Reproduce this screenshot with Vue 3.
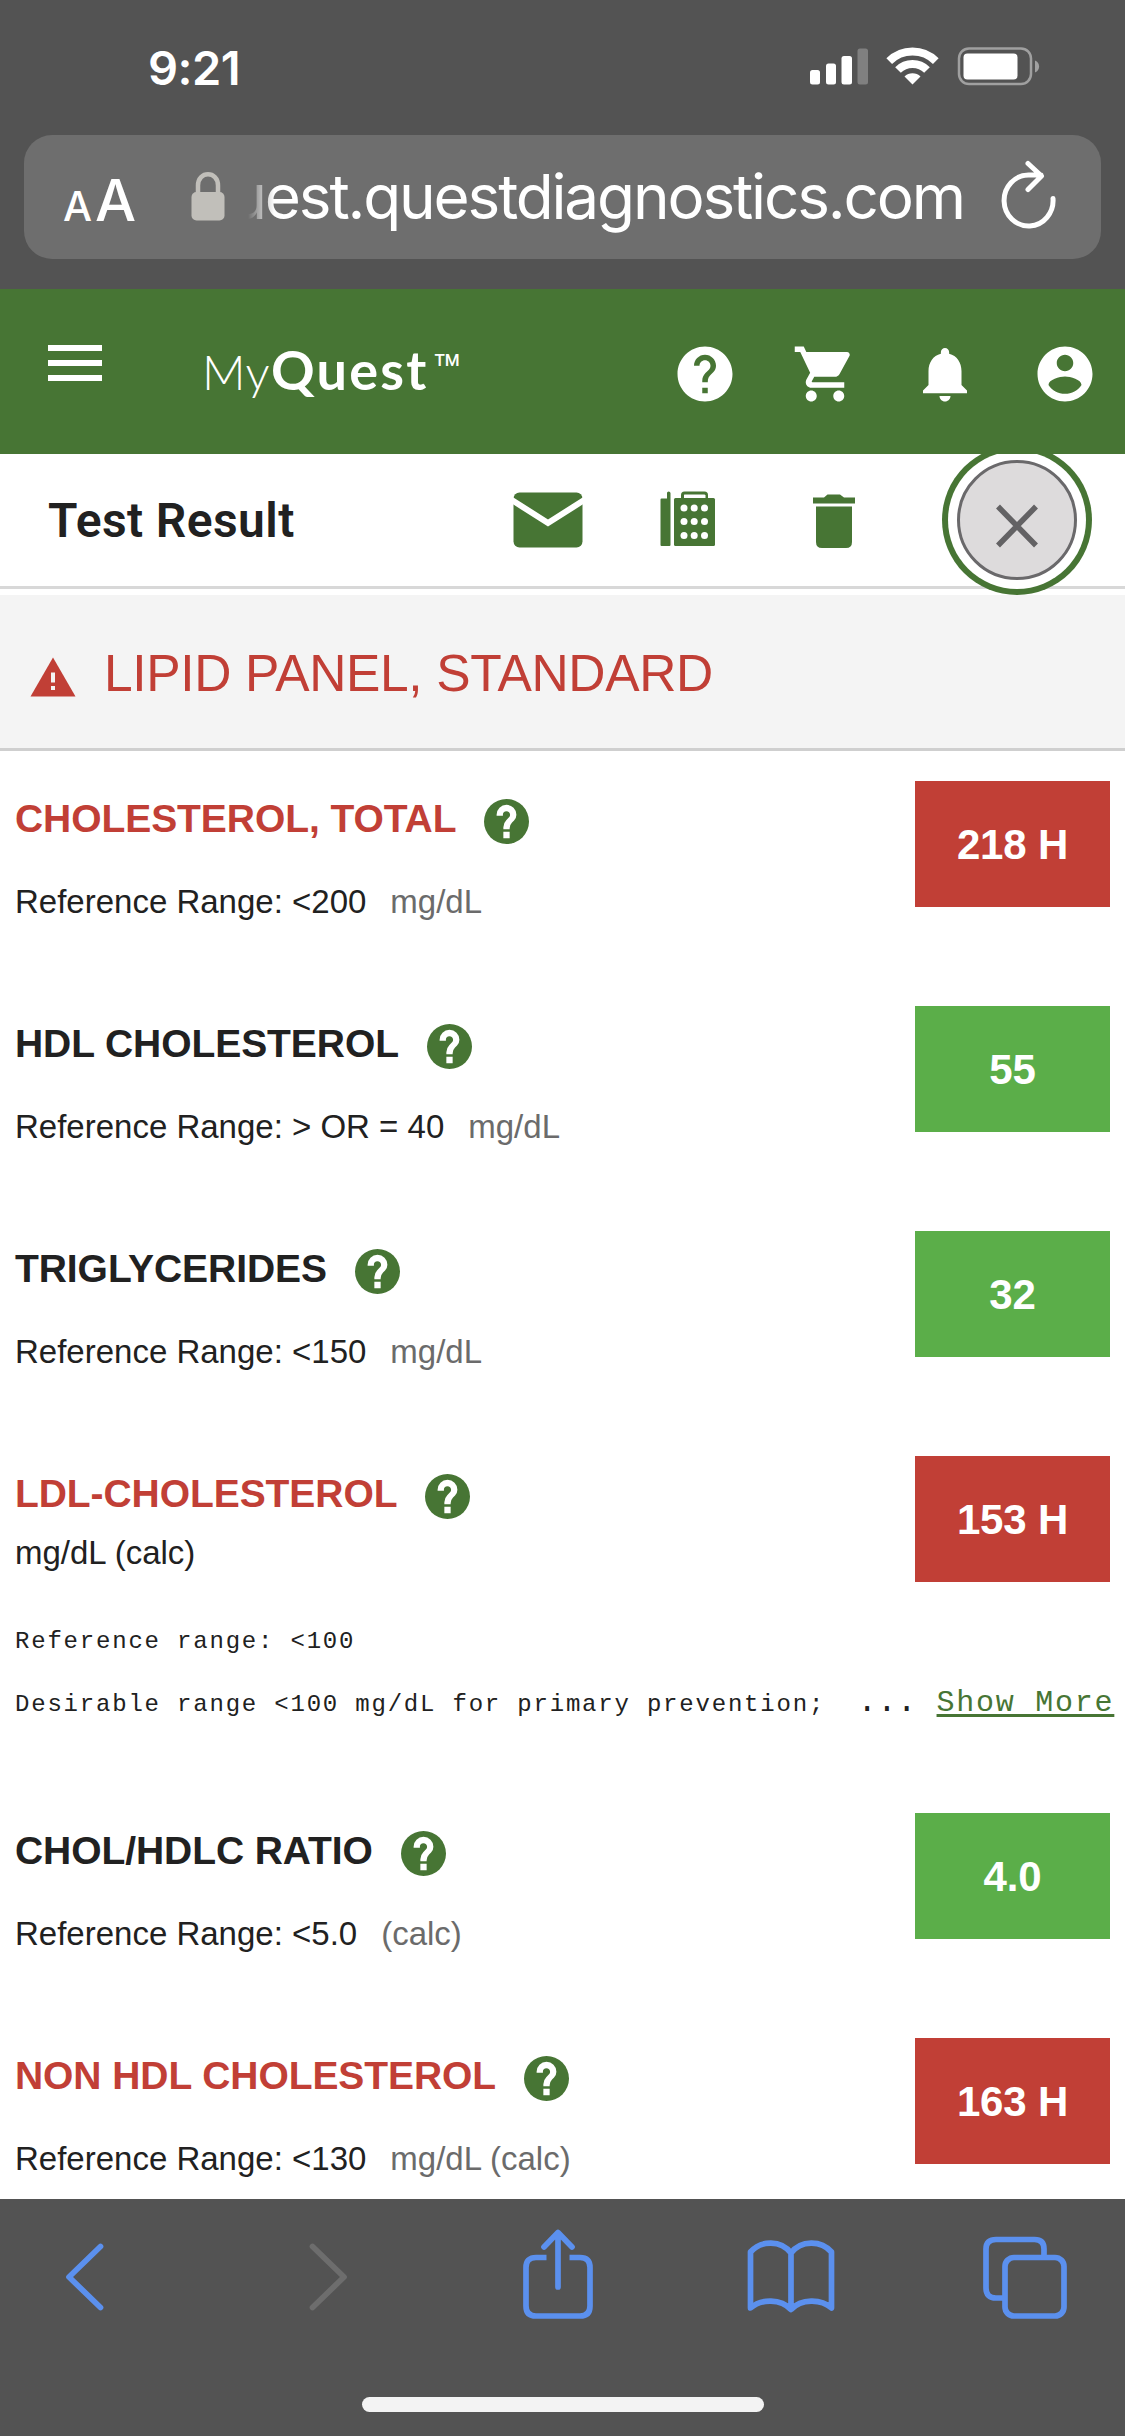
<template>
    <div class="phone">
        <header class="browser-top">
            <div class="status-bar">
                <span class="clock">9:21</span>
                <svg class="status-icons" viewBox="0 0 232 40" aria-hidden="true">
                    <rect x="1" y="24" width="10" height="14.5" rx="2.5" fill="#fff" />
                    <rect x="17" y="17.5" width="10" height="21" rx="2.5" fill="#fff" />
                    <rect x="32.5" y="10" width="10.5" height="28.5" rx="2.5" fill="#fff" />
                    <rect x="48.5" y="2.5" width="10.5" height="36" rx="2.5" fill="#808080" />
                    <path d="M80.2 15.2a33 33 0 0 1 46.6 0" fill="none" stroke="#fff" stroke-width="8" />
                    <path d="M89 24a20.5 20.5 0 0 1 29 0" fill="none" stroke="#fff" stroke-width="8" />
                    <path d="M103.5 38.5l-8-8a11.5 11.5 0 0 1 16 0z" fill="#fff" />
                    <rect x="150" y="2.5" width="72" height="35.5" rx="10" fill="none" stroke="#a0a0a0" stroke-width="2.5" />
                    <rect x="154.5" y="7.5" width="54" height="26" rx="4" fill="#fff" />
                    <path d="M226 14.500c5.500 2 5.500 10 0 12z" fill="#a0a0a0" />
                </svg>
            </div>
            <div class="url-bar">
                <span class="text-size"><small>A</small><span>A</span></span>
                <svg class="lock" viewBox="0 0 34 49" aria-hidden="true">
                    <rect x="0.5" y="20" width="33" height="28.5" rx="5" fill="#c1bfba" />
                    <path d="M7 22V13.500C7 -1.500 27 -1.500 27 13.500V22" fill="none" stroke="#c1bfba" stroke-width="4.5" />
                </svg>
                <div class="url"><span>uest.questdiagnostics.com</span></div>
                <svg class="reload" viewBox="0 0 60 70" aria-hidden="true">
                    <path d="M53 39.500A24.500 25.500 0 1 1 28.500 16H41M28 4.500L41.500 17L28 30.500" />
                </svg>
            </div>
        </header>

        <nav class="site-header">
            <div class="hamburger"><i></i><i></i><i></i></div>
            <div class="logo"><span class="my">My</span><b>Quest</b><sup>TM</sup></div>
            <div class="nav-icons">
                <svg v-for="icon in navIcons" :key="icon.name" viewBox="0 0 24 24" role="img" :aria-label="icon.name">
                    <path :d="icon.path" />
                </svg>
            </div>
        </nav>

        <section class="toolbar">
            <h1>Test Result</h1>
            <svg class="mail" viewBox="0 0 70 56" aria-hidden="true">
                <rect x="0.5" y="0.5" width="69" height="55" rx="6" fill="#477534" />
                <path d="M-2 7.500L35 31L72 7.500" fill="none" stroke="#fff" stroke-width="6" />
            </svg>
            <svg class="fax" viewBox="0 0 56 56" aria-hidden="true">
                <path d="M0.500 8.500q0-1 1-1H7V2q0-1.500 1.700-1.500T10.500 2V54q0 1-1 1h-8q-1 0-1-1z" fill="#477534" />
                <rect x="14" y="7" width="41" height="48" rx="1.5" fill="#477534" />
                <path d="M22.500 10V4q0-2 2-2h20q2 0 2 2v6" fill="none" stroke="#477534" stroke-width="3" />
                <rect x="24" y="4" width="21.5" height="3" fill="#fff" />
                <template v-for="y in [17, 30.5, 44.5]" :key="y">
                    <circle v-for="x in [24, 34.2, 44.5]" :key="x" :cx="x" :cy="y" r="3.5" fill="#fff" />
                </template>
            </svg>
            <svg class="trash" viewBox="0 0 42 54" aria-hidden="true">
                <path d="M0 3.500H11L14.500 0.500H27L31 3.500H42V9.500H0zM3 12.500H39V48q0 6-6 6H9q-6 0-6-6z" fill="#477534" />
            </svg>
            <button class="close" aria-label="Close">
                <svg viewBox="0 0 42 44"><path d="M2 2.500L40 41.500M40 2.500L2 41.500" /></svg>
            </button>
        </section>

        <section class="panel-title">
            <svg viewBox="0 0 46 40" aria-hidden="true">
                <path d="M23 0.500L45.500 39.500H0.500z" fill="#c13f36" />
                <path d="M21 15.500h4v10h-4zM21 29h4v4h-4z" fill="#f4f4f4" />
            </svg>
            <h2>LIPID PANEL, STANDARD</h2>
        </section>

        <main class="results">
            <article v-for="result in results" :key="result.name" class="result" :class="{ high: result.high, calculated: result.note }">
                <div class="summary">
                    <div class="info">
                        <div class="name">
                            <h3>{{ result.name }}</h3>
                            <svg viewBox="2 2 20 20" aria-hidden="true">
                                <circle cx="12" cy="12" r="10" fill="#477534" />
                                <path :d="questionMark" fill="#fff" stroke="#fff" stroke-width="0.8" />
                            </svg>
                        </div>
                        <p v-if="result.range" class="range">
                            Reference Range: {{ result.range }}<span class="unit">{{ result.unit }}</span>
                        </p>
                        <p v-else class="range">{{ result.unit }}</p>
                    </div>
                    <div class="value">{{ result.value }}</div>
                </div>
                <div v-if="result.note" class="note">
                    <p>{{ result.note[0] }}</p>
                    <p class="truncated">{{ result.note[1] }}<span class="dots">...</span><a>Show More</a></p>
                </div>
            </article>
        </main>

        <footer class="browser-bottom">
            <div class="tools">
                <svg class="back" viewBox="0 0 40 68"><path d="M35.500 3.500L4 34L35.500 64.500" /></svg>
                <svg class="forward" viewBox="0 0 40 68"><path d="M4.500 3.500L36 34L4.500 64.500" /></svg>
                <svg class="share" viewBox="0 0 70 90">
                    <path class="flat" d="M23.500 28.500H13Q3 28.500 3 38.500V77Q3 87 13 87H57Q67 87 67 77V38.500Q67 28.500 57 28.500H46.500" />
                    <path d="M35 58V4M21 18L35 3.500L49 18" />
                </svg>
                <svg class="book" viewBox="0 0 88 74">
                    <path d="M44 69V13C34 0 14 0 3.500 12V68C14 58.500 34 58.500 44 69.500C54 58.500 74 58.500 84.500 68V12C74 0 54 0 44 13" />
                </svg>
                <svg class="tabs" viewBox="0 0 84 83">
                    <path class="flat" d="M20 62H13Q3 62 3 52V13Q3 3.500 13 3.500H51.500Q61 3.500 61 13V20" />
                    <rect x="22" y="21.5" width="59" height="58.5" rx="9" />
                </svg>
            </div>
            <div class="home-indicator"></div>
        </footer>
    </div>
</template>

<script setup>
const questionMark = 'M13 19h-2v-2h2v2zm2.070-7.750l-.9.920C13.450 12.900 13 13.500 13 15h-2v-.5c0-1.100.45-2.100 1.170-2.830l1.240-1.260c.37-.36.59-.86.59-1.410 0-1.100-.9-2-2-2s-2 .9-2 2H8c0-2.210 1.790-4 4-4s4 1.790 4 4c0 .88-.36 1.680-.93 2.250z';

const navIcons = [
    {
        name: 'Help',
        path: 'M12 2C6.480 2 2 6.480 2 12s4.480 10 10 10 10-4.480 10-10S17.520 2 12 2zm1 17h-2v-2h2v2zm2.070-7.750l-.9.920C13.450 12.900 13 13.500 13 15h-2v-.5c0-1.100.45-2.100 1.170-2.830l1.240-1.260c.37-.36.59-.86.59-1.410 0-1.100-.9-2-2-2s-2 .9-2 2H8c0-2.210 1.790-4 4-4s4 1.790 4 4c0 .88-.36 1.680-.93 2.250z'
    },
    {
        name: 'Cart',
        path: 'M7 18c-1.100 0-1.990.9-1.990 2S5.900 22 7 22s2-.9 2-2-.9-2-2-2zM1 2v2h2l3.600 7.590-1.350 2.450c-.16.28-.25.61-.25.96 0 1.100.9 2 2 2h12v-2H7.420c-.14 0-.25-.11-.25-.25l.03-.12.9-1.630h7.450c.75 0 1.410-.41 1.750-1.030l3.580-6.490c.08-.14.12-.31.12-.48 0-.55-.45-1-1-1H5.210l-.94-2H1zm16 16c-1.100 0-1.990.9-1.990 2s.89 2 1.990 2 2-.9 2-2-.9-2-2-2z'
    },
    {
        name: 'Notifications',
        path: 'M12 22c1.100 0 2-.9 2-2h-4c0 1.100.89 2 2 2zm6-6v-5c0-3.070-1.640-5.640-4.500-6.320V4c0-.83-.67-1.500-1.500-1.500s-1.500.67-1.500 1.500v.68C7.630 5.360 6 7.920 6 11v5l-2 2v1h16v-1l-2-2z'
    },
    {
        name: 'Account',
        path: 'M12 2C6.480 2 2 6.480 2 12s4.480 10 10 10 10-4.480 10-10S17.520 2 12 2zm0 3c1.660 0 3 1.340 3 3s-1.340 3-3 3-3-1.340-3-3 1.340-3 3-3zm0 14.200c-2.500 0-4.710-1.280-6-3.220.03-1.990 4-3.080 6-3.080 1.990 0 5.970 1.090 6 3.080-1.290 1.940-3.500 3.220-6 3.220z'
    }
];

const results = [
    { name: 'CHOLESTEROL, TOTAL', range: '<200', unit: 'mg/dL', value: '218 H', high: true },
    { name: 'HDL CHOLESTEROL', range: '> OR = 40', unit: 'mg/dL', value: '55' },
    { name: 'TRIGLYCERIDES', range: '<150', unit: 'mg/dL', value: '32' },
    {
        name: 'LDL-CHOLESTEROL',
        unit: 'mg/dL (calc)',
        value: '153 H',
        high: true,
        note: ['Reference range: <100', 'Desirable range <100 mg/dL for primary prevention;']
    },
    { name: 'CHOL/HDLC RATIO', range: '<5.0', unit: '(calc)', value: '4.0' },
    { name: 'NON HDL CHOLESTEROL', range: '<130', unit: 'mg/dL (calc)', value: '163 H', high: true }
];
</script>

<style>
body {
    margin: 0;
    background: #fff;
}
</style>

<style scoped>
.phone {
    display: flex;
    flex-direction: column;
    width: 1125px;
    height: 2436px;
    overflow: hidden;
    background: #fff;
    color: #212121;
    font-family: "Liberation Sans", Arial, sans-serif;
}

h1, h2, h3, p {
    margin: 0;
}

svg {
    display: block;
    flex: none;
}

/* Browser top */
.browser-top {
    flex: none;
    box-sizing: border-box;
    height: 289px;
    padding: 0 24px;
    background: #535353;
    color: #fff;
    font-family: Inter, sans-serif;
}

.status-bar {
    display: flex;
    justify-content: space-between;
    box-sizing: border-box;
    height: 135px;
    padding: 46px 60px 0 124px;
}

.clock {
    font-size: 47px;
    font-weight: 600;
    line-height: 43px;
    letter-spacing: -0.5px;
}

.status-icons {
    width: 232px;
    height: 40px;
}

.url-bar {
    display: flex;
    align-items: flex-start;
    box-sizing: border-box;
    width: 1077px;
    height: 124px;
    padding-left: 39px;
    border-radius: 28px;
    background: #6e6e6e;
}

.text-size {
    display: flex;
    align-items: baseline;
    gap: 3px;
    width: 128px;
    padding-top: 34px;
    font-size: 58px;
    font-weight: 500;
    line-height: 62px;
}

.text-size small {
    font-size: 41px;
    line-height: 44px;
}

.lock {
    width: 34px;
    height: 49px;
    margin-top: 37px;
}

/* Long addresses fade out behind the lock */
.url {
    display: flex;
    justify-content: flex-end;
    width: 716px;
    margin-left: 23px;
    overflow: hidden;
    font-size: 62px;
    line-height: 124px;
    letter-spacing: -2.15px;
    mask-image: linear-gradient(to right, transparent, #000 26px);
}

.url span {
    flex: none;
}

.reload {
    width: 60px;
    height: 70px;
    margin: 24px 0 0 36px;
    fill: none;
    stroke: #fff;
    stroke-width: 5;
    stroke-linecap: round;
    stroke-linejoin: round;
}

/* Site header */
.site-header {
    position: relative;
    z-index: 1;
    display: flex;
    flex: none;
    align-items: flex-start;
    box-sizing: border-box;
    height: 165px;
    padding: 0 27px 0 48px;
    background: #477534;
    color: #fff;
}

.hamburger {
    display: flex;
    flex-direction: column;
    gap: 9px;
    width: 54px;
    margin-top: 56px;
}

.hamburger i {
    height: 6px;
    background: #fff;
}

.logo {
    display: flex;
    align-items: baseline;
    margin: 48px 0 0 100px;
    font-family: Lato, sans-serif;
    font-size: 54px;
    line-height: 66px;
}

.logo .my {
    font-size: 48px;
    font-weight: 300;
    letter-spacing: 0.5px;
}

.logo b {
    margin-left: 1px;
    font-weight: 700;
    letter-spacing: 2.2px;
}

.logo sup {
    align-self: flex-start;
    margin: 13px 0 0 6px;
    font-family: Roboto, sans-serif;
    font-size: 17px;
    font-weight: 500;
    line-height: 20px;
}

.nav-icons {
    display: flex;
    gap: 54px;
    margin: 52px 0 0 auto;
}

.nav-icons svg {
    width: 66px;
    height: 66px;
    fill: #fff;
}

/* Page toolbar */
.toolbar {
    display: flex;
    flex: none;
    align-items: flex-start;
    box-sizing: border-box;
    height: 135px;
    padding-left: 48px;
    border-bottom: 3px solid #d8d8d8;
}

.toolbar h1 {
    width: 465px;
    padding-top: 37px;
    font-family: Roboto, sans-serif;
    font-size: 48px;
    font-weight: 600;
    line-height: 60px;
    letter-spacing: 0.4px;
}

.mail {
    width: 70px;
    height: 56px;
    margin-top: 38px;
}

.fax {
    width: 56px;
    height: 56px;
    margin: 37px 0 0 76.5px;
}

.trash {
    width: 42px;
    height: 54px;
    margin: 40px 0 0 97px;
}

.close {
    display: flex;
    flex: none;
    align-items: center;
    justify-content: center;
    box-sizing: border-box;
    width: 120px;
    height: 120px;
    margin: 6px 0 0 102.5px;
    padding: 11px 0 0;
    border: 3px solid #6a696b;
    border-radius: 50%;
    background: #dddbdc;
    box-shadow: 0 0 0 9px #fff, 0 0 0 15px #477534;
}

.close svg {
    width: 42px;
    height: 44px;
    fill: none;
    stroke: #636264;
    stroke-width: 5.5;
}

/* Panel heading */
.panel-title {
    display: flex;
    flex: none;
    align-items: flex-start;
    box-sizing: border-box;
    height: 156px;
    margin-top: 6px;
    padding-left: 30px;
    border-bottom: 3px solid #cfcfcf;
    background: #f4f4f4;
    color: #c13f36;
}

.panel-title svg {
    width: 46px;
    height: 40px;
    margin-top: 62px;
}

.panel-title h2 {
    margin: 48px 0 0 28px;
    font-size: 51.5px;
    font-weight: 400;
    line-height: 60px;
    letter-spacing: -0.35px;
}

/* Results */
.results {
    flex: none;
    height: 1448px;
    overflow: hidden;
}

.result {
    box-sizing: border-box;
    height: 225px;
    padding: 30px 15px 0;
}

.result.calculated {
    height: 357px;
}

.summary {
    display: flex;
    justify-content: space-between;
    height: 126px;
}

.info {
    padding-top: 18px;
}

.name {
    display: flex;
    gap: 28px;
}

.name h3 {
    font-size: 39px;
    font-weight: 700;
    line-height: 39px;
    letter-spacing: -0.07px;
}

.high .name h3 {
    color: #c13f36;
}

.name svg {
    width: 45px;
    height: 45px;
}

.range {
    margin-top: 38px;
    font-size: 33px;
    line-height: 40px;
    white-space: nowrap;
}

.calculated .range {
    margin-top: 14px;
}

.unit {
    margin-left: 24px;
    color: #6b6b6b;
}

.value {
    width: 195px;
    background: #5bae49;
    color: #fff;
    font-size: 42px;
    font-weight: 700;
    line-height: 128px;
    letter-spacing: -0.2px;
    text-align: center;
}

.high .value {
    background: #c13f36;
}

.note {
    margin-top: 28px;
    font-family: "Liberation Mono", "Courier New", monospace;
    font-size: 24px;
    line-height: 63px;
    letter-spacing: 1.8px;
    white-space: nowrap;
}

.note p {
    display: flex;
    align-items: baseline;
    height: 63px;
}

.note .truncated {
    margin-top: -2px;
}

.note .dots {
    margin: 0 20px 0 32px;
    font-size: 33px;
    letter-spacing: 0;
}

.note a {
    color: #477534;
    font-size: 30px;
    letter-spacing: 1.75px;
    text-decoration: underline;
    text-decoration-skip-ink: none;
    text-decoration-thickness: 3px;
    text-underline-offset: 3px;
}

/* Browser bottom */
.browser-bottom {
    display: flex;
    flex: none;
    flex-direction: column;
    height: 237px;
    background: #535353;
}

.tools {
    display: flex;
    align-items: flex-start;
    box-sizing: border-box;
    height: 198px;
    padding: 30px 0 0 65px;
}

.tools svg {
    fill: none;
    stroke: #5b90ee;
    stroke-width: 5.7;
    stroke-linecap: round;
    stroke-linejoin: round;
}

.tools .flat {
    stroke-linecap: butt;
}

.tools .back,
.tools .forward {
    width: 40px;
    height: 68px;
    margin-top: 14px;
}

.tools .forward {
    margin-left: 203px;
    stroke: #6d6d6d;
}

.tools .share {
    width: 70px;
    height: 90px;
    margin-left: 175px;
}

.tools .book {
    width: 88px;
    height: 74px;
    margin: 11px 0 0 153.5px;
}

.tools .tabs {
    width: 84px;
    height: 83px;
    margin: 7px 0 0 148px;
}

.home-indicator {
    align-self: center;
    width: 402px;
    height: 15px;
    border-radius: 8px;
    background: #f3f3f3;
}
</style>
